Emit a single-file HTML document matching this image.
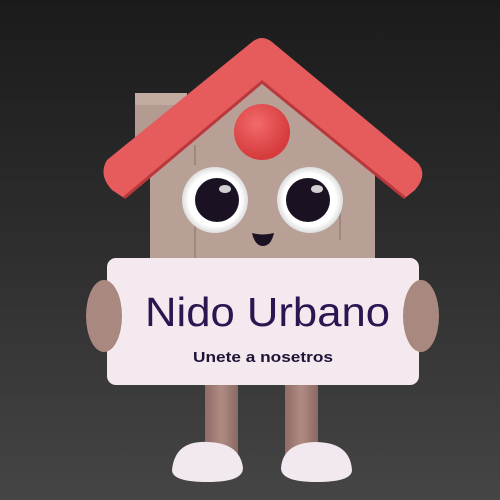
<!DOCTYPE html>
<html><head><style>
html,body{margin:0;padding:0;width:500px;height:500px;overflow:hidden;background:linear-gradient(#1b1b1b,#2e2e2e 50%,#454545);}
</style></head><body>
<svg width="500" height="500" viewBox="0 0 500 500" style="position:absolute;left:0;top:0">
<defs>
<radialGradient id="eye" cx="0.5" cy="0.5" r="0.5"><stop offset="0.8" stop-color="#fff"/><stop offset="1" stop-color="#ddd"/></radialGradient>
<radialGradient id="ball" cx="0.4" cy="0.35" r="0.6"><stop offset="0" stop-color="#f36a6a"/><stop offset="1" stop-color="#d63c3e"/></radialGradient>
<linearGradient id="leg" x1="0" x2="1"><stop offset="0" stop-color="#8f6c66"/><stop offset="0.5" stop-color="#b08b82"/><stop offset="1" stop-color="#8a6963"/></linearGradient>
</defs>
<rect x="135" y="93" width="52" height="60" rx="3" fill="#b39b91"/>
<rect x="135" y="93" width="52" height="12" fill="#c2aba1"/>
<path d="M150 170 L262 75 L375 170 L375 268 L150 268 Z" fill="#b8a096"/>
<path d="M195 145 V165 M195 225 V260 M340 205 V240" stroke="#9f887e" stroke-width="2" fill="none"/>
<path d="M107 160 L252 42 Q262 34 272 42 L418 163 Q428 175 415 190 L405 198 L262 82 L124 198 L112 190 Q98 175 107 160 Z" fill="#e65b5b"/>
<path d="M124 198 L262 82 L405 198" fill="none" stroke="#b8383c" stroke-width="3"/>
<circle cx="262" cy="132" r="28" fill="url(#ball)"/>
<circle cx="215" cy="200" r="33" fill="url(#eye)"/>
<circle cx="217" cy="200" r="22" fill="#1a1222"/>
<ellipse cx="225" cy="189" rx="6" ry="4" fill="#fff" opacity="0.8"/>
<circle cx="310" cy="200" r="33" fill="url(#eye)"/>
<circle cx="308" cy="200" r="22" fill="#1a1222"/>
<ellipse cx="317" cy="189" rx="6" ry="4" fill="#fff" opacity="0.8"/>
<path d="M252 233 Q263 236 274 233 Q271 246 263 246 Q255 246 252 233 Z" fill="#1a1222"/>
<rect x="205" y="380" width="33" height="80" fill="url(#leg)"/>
<rect x="285" y="380" width="33" height="80" fill="url(#leg)"/>
<path d="M172 470 Q175 440 208 442 Q240 443 243 468 Q243 482 208 482 Q172 482 172 470 Z" fill="#f1e8f0"/>
<path d="M281 468 Q283 443 315 442 Q350 442 352 470 Q352 482 316 482 Q281 482 281 468 Z" fill="#f1e8f0"/>
<rect x="107" y="258" width="312" height="127" rx="9" fill="#f3e9ef"/>
<ellipse cx="104" cy="316" rx="18" ry="36" fill="#a98880"/>
<ellipse cx="421" cy="316" rx="18" ry="36" fill="#a98880"/>
<text x="145" y="326" textLength="245" lengthAdjust="spacingAndGlyphs" font-family="Liberation Sans, sans-serif" font-size="41" fill="#2a1650">Nido Urbano</text>
<text x="193" y="362" textLength="140" lengthAdjust="spacingAndGlyphs" font-family="Liberation Sans, sans-serif" font-size="15" font-weight="bold" fill="#1e1438">Unete a nosetros</text>
</svg>
</body></html>
